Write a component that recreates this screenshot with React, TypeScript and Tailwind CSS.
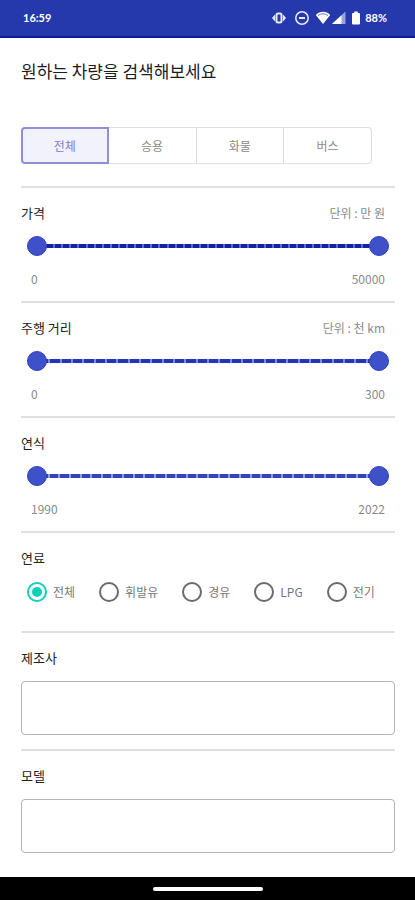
import { useState, type ReactNode } from "react";

type RangeProps = {
  id: string;
  title: string;
  unit?: string;
  min: number;
  max: number;
  step: number;
  ticks: number;
  track: string;
  tick: string;
};

const thumb =
  "pointer-events-none col-start-1 row-start-1 h-5 w-full appearance-none bg-transparent outline-none " +
  "[&::-webkit-slider-thumb]:pointer-events-auto [&::-webkit-slider-thumb]:size-5 [&::-webkit-slider-thumb]:appearance-none " +
  "[&::-webkit-slider-thumb]:rounded-full [&::-webkit-slider-thumb]:border [&::-webkit-slider-thumb]:border-[#2f40c0] [&::-webkit-slider-thumb]:bg-[#3f51c8]";

function Section({ children, className }: { children: ReactNode; className: string }) {
  return <section className={`border-t-2 border-[#e0e0e0] pt-[15px] ${className}`}>{children}</section>;
}

function RangeSection({ id, title, unit, min, max, step, ticks, track, tick }: RangeProps) {
  const [low, setLow] = useState(min);
  const [high, setHigh] = useState(max);
  return (
    <Section className="pb-3">
      <div className="flex justify-between pr-[10px] leading-5">
        <h2 id={id} className="text-[13px] leading-5 text-[#222222]">{title}</h2>
        {unit && <span className="text-xs leading-5 text-[#8a8a8a]">{unit}</span>}
      </div>
      <div className="mx-[6px] my-[13px] grid items-center" role="group" aria-labelledby={id}>
        <div className={`col-start-1 row-start-1 mx-[10px] flex h-1 items-center justify-between ${track}`}>
          {Array.from({ length: ticks + 1 }, (_, i) => (
            <span key={i} className={`h-full w-0.5 ${tick}`} />
          ))}
        </div>
        <input
          type="range"
          aria-label={`${title} 최소`}
          min={min}
          max={max}
          step={step}
          value={low}
          onChange={(e) => setLow(Math.min(Number(e.target.value), high))}
          className={thumb}
        />
        <input
          type="range"
          aria-label={`${title} 최대`}
          min={min}
          max={max}
          step={step}
          value={high}
          onChange={(e) => setHigh(Math.max(Number(e.target.value), low))}
          className={thumb}
        />
      </div>
      <div className="flex justify-between px-[10px] text-xs leading-5 text-[#8a8a8a]">
        <span>{low}</span>
        <span>{high}</span>
      </div>
    </Section>
  );
}

function StatusBar() {
  return (
    <header className="flex h-[38px] items-center justify-between border-b-2 border-[#1018a0] bg-[#2538ac] pr-7 pl-[23px] font-['Lato','Noto_Sans_CJK_KR',sans-serif] text-[11px] font-bold text-white">
      <span>16:59</span>
      <div className="flex items-center">
        <svg className="mr-[7px] h-4 w-4" viewBox="0 0 16 16" fill="none" stroke="#e8ebff" strokeWidth="2">
          <rect x="5.500" y="3.500" width="5" height="9" rx="1.500" />
          <path d="M4 4.500 1 8 4 11.500ZM12 4.500l3 3.500L12 11.500Z" fill="#e8ebff" stroke="none" />
        </svg>
        <svg className="mr-[5px] h-4 w-4" viewBox="0 0 16 16" fill="none" stroke="#e8ebff" strokeWidth="1.500">
          <circle cx="8" cy="8" r="6.200" />
          <path d="M5 8h6" strokeWidth="2" />
        </svg>
        <svg className="h-4 w-4" viewBox="0 0 16 16" fill="none">
          <path d="M.8 5C4.800.8 11.200.8 15.200 5L8 14Z" fill="#ffffff" />
          <path d="M3 5.600c3-2.400 7-2.400 10 0" stroke="#5c6bc8" strokeWidth="1" />
        </svg>
        <svg className="mr-1 h-4 w-4" viewBox="0 0 16 16">
          <path d="M14.500 1.500V14H1Z" fill="#97a3e0" />
          <path d="M10.500 5.200V14H1Z" fill="#ffffff" />
        </svg>
        <svg className="mr-1 h-4 w-[10px]" viewBox="0 0 10 16">
          <path d="M3.200 1.500h3.600v1.500H8a1 1 0 0 1 1 1v9.500a1 1 0 0 1-1 1H2a1 1 0 0 1-1-1V4a1 1 0 0 1 1-1h1.200Z" fill="#ffffff" />
        </svg>
        <span>88%</span>
      </div>
    </header>
  );
}

const vehicleTypes = ["전체", "승용", "화물", "버스"];
const fuels = ["전체", "휘발유", "경유", "LPG", "전기"];

export default function App() {
  const [vehicle, setVehicle] = useState("전체");
  const [fuel, setFuel] = useState("전체");
  return (
    <div className="flex min-h-screen flex-col bg-white font-['Noto_Sans_CJK_KR',sans-serif]">
      <StatusBar />
      <main className="flex-1 pr-5 pb-[9px] pl-[21px]">
        <h1 className="pt-[21px] text-[17px] leading-6 text-[#1c1c1c]">원하는 차량을 검색해보세요</h1>
        <div className="mt-11 mr-[23px] mb-[22px] flex h-[37px]">
          {vehicleTypes.map((name) => (
            <button
              key={name}
              type="button"
              aria-pressed={vehicle === name}
              onClick={() => setVehicle(name)}
              className={`w-1/4 text-xs first:rounded-l last:rounded-r ${
                vehicle === name
                  ? "border-2 border-[#8f8ed6] bg-[#f1f2fc] text-[#7c7acc]"
                  : "border-y border-r border-[#dfdfdf] text-[#8a8a8a]"
              }`}
            >
              {name}
            </button>
          ))}
        </div>

        <RangeSection id="price" title="가격" unit="단위 : 만 원" min={0} max={50000} step={1000} ticks={42} track="bg-[#1420aa]" tick="bg-[#5c6ac8]" />
        <RangeSection id="mileage" title="주행 거리" unit="단위 : 천 km" min={0} max={300} step={10} ticks={30} track="bg-[#2434b8]" tick="bg-[#7f8dd8]" />
        <RangeSection id="year" title="연식" min={1990} max={2022} step={1} ticks={32} track="bg-[#3444c0]" tick="bg-[#8f9cd8]" />

        <Section className="pb-[29px]">
          <h2 id="fuel" className="text-[13px] leading-5 text-[#222222]">연료</h2>
          <div role="radiogroup" aria-labelledby="fuel" className="mt-[14px] flex gap-6 pl-[6px]">
            {fuels.map((name) => (
              <label key={name} className="flex items-center gap-[6px] text-xs leading-5 whitespace-nowrap text-[#777777]">
                <input
                  type="radio"
                  name="fuel"
                  checked={fuel === name}
                  onChange={() => setFuel(name)}
                  className="size-5 shrink-0 appearance-none rounded-full border-2 border-[#6a6a6a] bg-clip-content p-[3px] checked:border-[#0fd0b8] checked:bg-[#0fd0b8]"
                />
                {name}
              </label>
            ))}
          </div>
        </Section>

        <Section className="pb-[14px]">
          <label htmlFor="maker" className="block text-[13px] leading-5 text-[#222222]">제조사</label>
          <input id="maker" type="text" className="mt-[13px] block h-[54px] w-full rounded border border-[#b4b4b4] px-3 text-sm" />
        </Section>
        <Section className="pb-[14px]">
          <label htmlFor="model" className="block text-[13px] leading-5 text-[#222222]">모델</label>
          <input id="model" type="text" className="mt-[13px] block h-[54px] w-full rounded border border-[#b4b4b4] px-3 text-sm" />
        </Section>
      </main>
      <footer className="flex h-[23px] items-center justify-center bg-black">
        <div className="h-1 w-[110px] rounded-full bg-white" />
      </footer>
    </div>
  );
}
